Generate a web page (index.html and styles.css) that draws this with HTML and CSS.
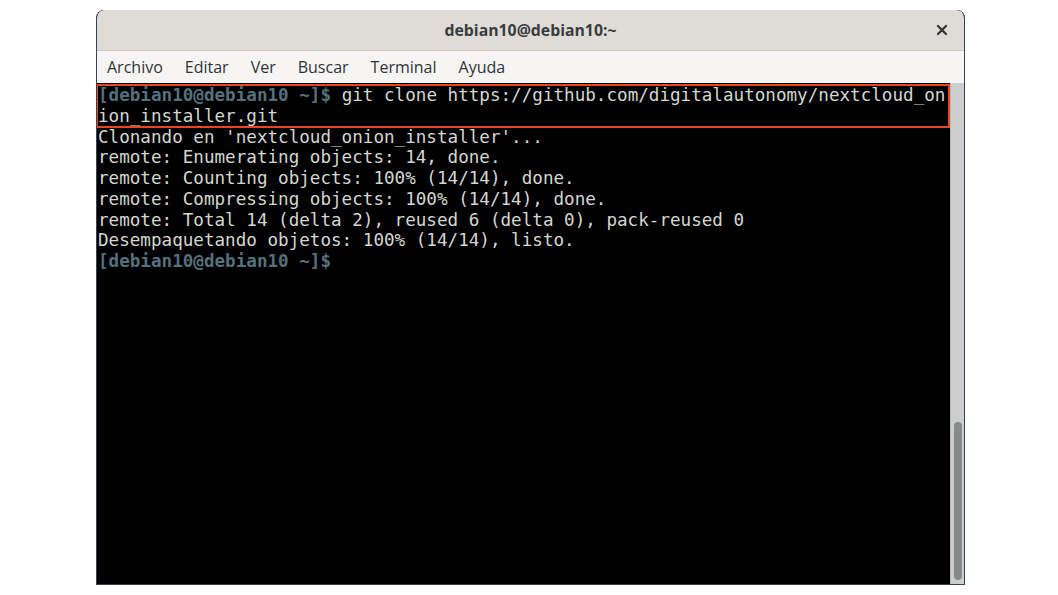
FILE: index.html
```html
<!DOCTYPE html>
<html lang="es">
<head>
<meta charset="utf-8">
<title>debian10@debian10:~</title>
<link rel="stylesheet" href="styles.css">
</head>
<body>
<div class="window">
  <div class="titlebar">
    <span class="title">debian10@debian10:~</span>
    <span class="close">
      <svg width="12" height="12" viewBox="0 0 12 12"><path d="M2 2 L10 10 M10 2 L2 10" stroke="#2e3436" stroke-width="2.2" stroke-linecap="round"/></svg>
    </span>
  </div>
  <div class="menubar">
    <span class="menu-item">Archivo</span>
    <span class="menu-item">Editar</span>
    <span class="menu-item">Ver</span>
    <span class="menu-item">Buscar</span>
    <span class="menu-item">Terminal</span>
    <span class="menu-item">Ayuda</span>
  </div>
  <div class="content">
    <div class="terminal"><div class="highlight"><div class="line"><span class="prompt">[debian10@debian10 ~]$</span> git clone https://github.com/digitalautonomy/nextcloud_on</div><div class="line">ion_installer.git</div></div><div class="line">Clonando en 'nextcloud_onion_installer'...</div><div class="line">remote: Enumerating objects: 14, done.</div><div class="line">remote: Counting objects: 100% (14/14), done.</div><div class="line">remote: Compressing objects: 100% (14/14), done.</div><div class="line">remote: Total 14 (delta 2), reused 6 (delta 0), pack-reused 0</div><div class="line">Desempaquetando objetos: 100% (14/14), listo.</div><div class="line"><span class="prompt">[debian10@debian10 ~]$</span></div></div>
    <div class="scrollbar"><div class="thumb"></div></div>
  </div>
</div>
</body>
</html>
```
FILE: styles.css
```css
html, body {
  margin: 0;
  padding: 0;
  background: #ffffff;
}

body {
  padding: 10px 0 0 96px;
}

.window {
  width: 869px;
  height: 575px;
  box-sizing: border-box;
  border: 1px solid #3b4350;
  border-top: none;
  border-radius: 8px 8px 0 0;
  display: flex;
  flex-direction: column;
  overflow: hidden;
  background: #000;
}

.titlebar {
  height: 41px;
  flex: none;
  background: #dfdcd8;
  border-bottom: 1px solid #cdc9c5;
  box-sizing: border-box;
  display: flex;
  align-items: center;
  justify-content: center;
  position: relative;
  border-radius: 7px 7px 0 0;
}

.title {
  font-family: "Open Sans", "DejaVu Sans", sans-serif;
  font-weight: 700;
  font-size: 15.8px;
  color: #3a3d3f;
}

.close {
  position: absolute;
  right: 16px;
  top: 14px;
  width: 12px;
  height: 12px;
  display: flex;
}

.menubar {
  height: 32px;
  flex: none;
  background: #f6f5f4;
  display: flex;
  align-items: center;
  padding-left: 10px;
  font-family: "Open Sans", "DejaVu Sans", sans-serif;
  font-size: 16px;
  color: #2e3436;
}

.menu-item {
  margin-right: 22px;
}

.content {
  flex: 1;
  display: flex;
  min-height: 0;
}

.terminal {
  flex: 1;
  background: #000000;
  color: #d3d7cf;
  font-family: "DejaVu Sans Mono", monospace;
  font-size: 17.6px;
  line-height: 20.75px;
  padding: 2px 0 0 1px;
  white-space: pre;
  overflow: hidden;
}

.highlight {
  outline: 2px solid #e8461c;
  outline-offset: -1px;
  margin-left: -1px;
  padding-left: 1px;
  margin-right: 1px;
}

.prompt {
  color: #55707c;
  font-weight: 700;
}

.scrollbar {
  width: 14px;
  flex: none;
  background: #cecece;
  border-left: 1px solid #b8b8b8;
  box-sizing: border-box;
  display: flex;
  flex-direction: column;
  justify-content: flex-end;
  padding: 0 2px 4px 3px;
}

.thumb {
  height: 158px;
  background: #858a8a;
  border-radius: 4px;
}
```
